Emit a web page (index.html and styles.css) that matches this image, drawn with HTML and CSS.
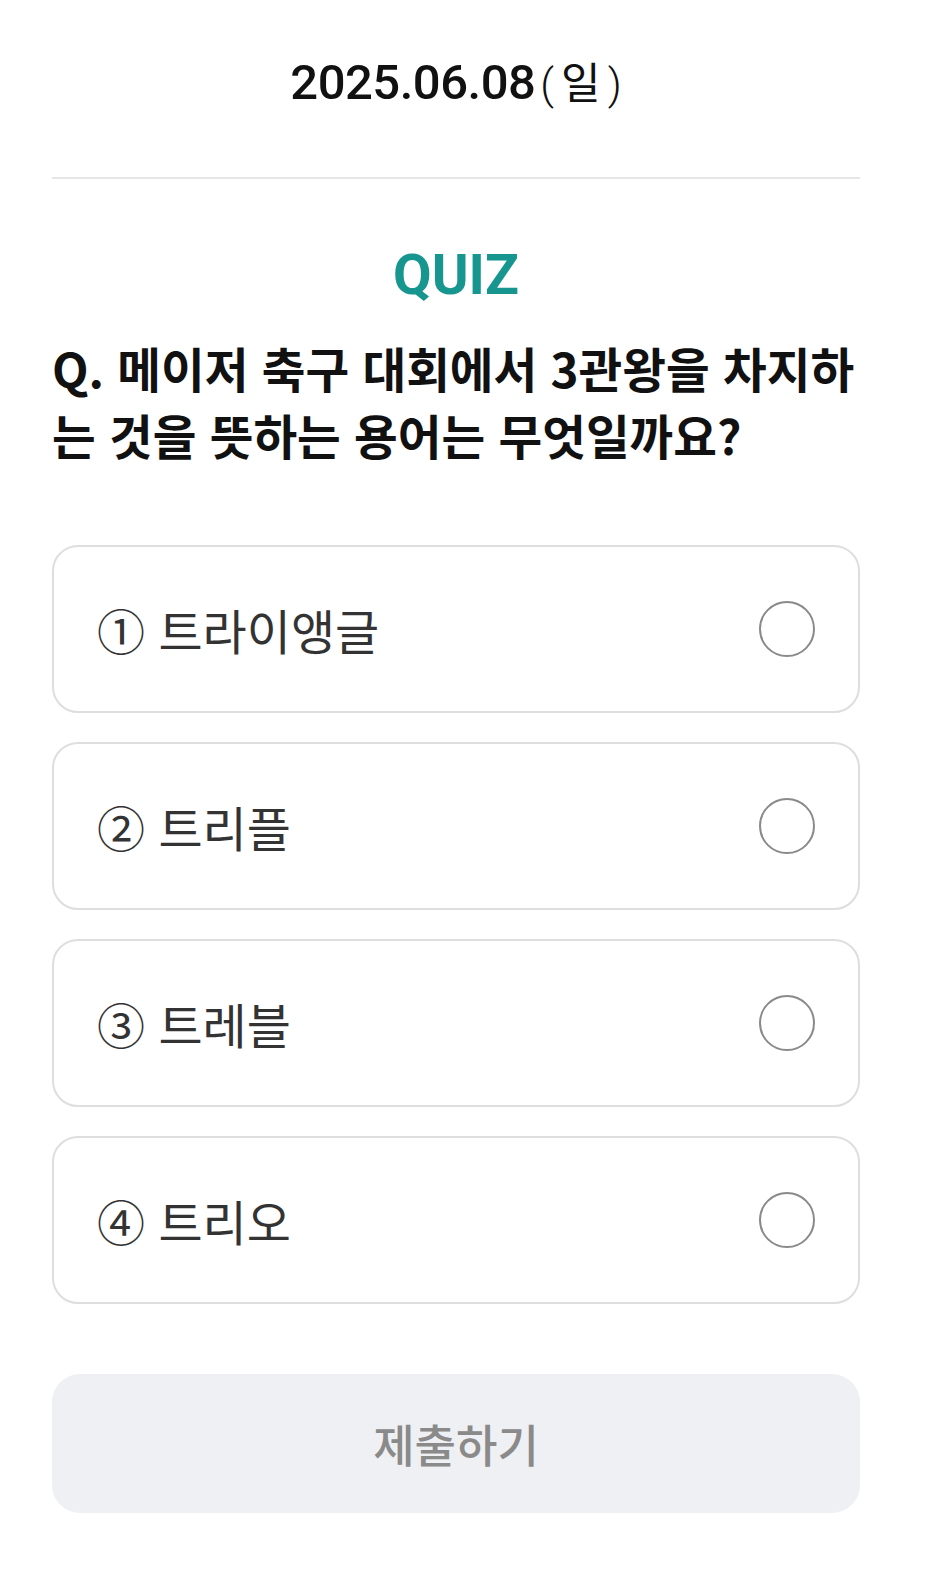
FILE: index.html
```html
<!DOCTYPE html>
<html lang="ko">
<head>
<meta charset="utf-8">
<link rel="stylesheet" href="styles.css">
</head>
<body>
<main class="page">
  <header class="date-head">
    <span class="date">2025.06.08</span><span class="weekday"><span class="paren">(</span>일<span class="paren">)</span></span>
  </header>
  <section class="quiz">
    <h2 class="quiz-title">QUIZ</h2>
    <p class="question">Q. 메이저 축구 대회에서 3관왕을 차지하는 것을 뜻하는 용어는 무엇일까요?</p>
    <ul class="options">
      <li class="option"><span class="option-label">① 트라이앵글</span><span class="radio"></span></li>
      <li class="option"><span class="option-label">② 트리플</span><span class="radio"></span></li>
      <li class="option"><span class="option-label">③ 트레블</span><span class="radio"></span></li>
      <li class="option"><span class="option-label">④ 트리오</span><span class="radio"></span></li>
    </ul>
    <button class="submit" type="button">제출하기</button>
  </section>
</main>
</body>
</html>
```

FILE: styles.css
```css
* { box-sizing: border-box; }
html, body { margin: 0; padding: 0; background: #fff; }
body {
  font-family: "Noto Sans CJK KR", "Noto Sans", sans-serif;
  color: #111;
}
.page {
  width: 808px;
  margin-left: 52px;
}
.date-head {
  display: flex;
  justify-content: center;
  align-items: baseline;
  height: 179px;
  padding-top: 50px;
  border-bottom: 2px solid #e6e6e6;
}
.date {
  font-family: Roboto, "Liberation Sans", sans-serif;
  font-size: 49px;
  font-weight: 500;
  line-height: 60px;
  letter-spacing: -0.5px;
  color: #111;
}
.weekday {
  font-family: "Noto Sans CJK KR", sans-serif;
  font-size: 43px;
  font-weight: 400;
  line-height: 60px;
  margin-left: 5px;
  color: #111;
}
.paren {
  font-family: Roboto, sans-serif;
  font-weight: 300;
  margin: 0 7px;
}
.paren:first-child { margin-left: 0; }
.paren:last-child { margin-right: 0; }
.quiz {
  display: flex;
  flex-direction: column;
}
.quiz-title {
  margin: 66px 0 0;
  text-align: center;
  font-family: Roboto, "Liberation Sans", sans-serif;
  font-size: 56px;
  font-weight: 700;
  line-height: 60px;
  color: #17958f;
}
.question {
  margin: 29px 0 0;
  font-size: 47.5px;
  font-weight: 700;
  line-height: 67px;
  letter-spacing: 0;
  word-break: break-all;
  color: #111;
}
.options {
  list-style: none;
  margin: 77px 0 0;
  padding: 0;
  display: flex;
  flex-direction: column;
  gap: 29px;
}
.option {
  display: flex;
  align-items: center;
  justify-content: space-between;
  height: 168px;
  padding: 0 43px 0 43px;
  border: 2px solid #dedede;
  border-radius: 26px;
}
.option-label {
  font-size: 48px;
  font-weight: 400;
  color: #333;
}
.radio {
  width: 56px;
  height: 56px;
  border: 2px solid #8a8a8a;
  border-radius: 50%;
}
.submit {
  margin-top: 70px;
  height: 139px;
  border: none;
  border-radius: 28px;
  background: #eff0f3;
  font-family: "Noto Sans CJK KR", sans-serif;
  font-size: 45px;
  font-weight: 500;
  color: #8a8a8a;
}
```
